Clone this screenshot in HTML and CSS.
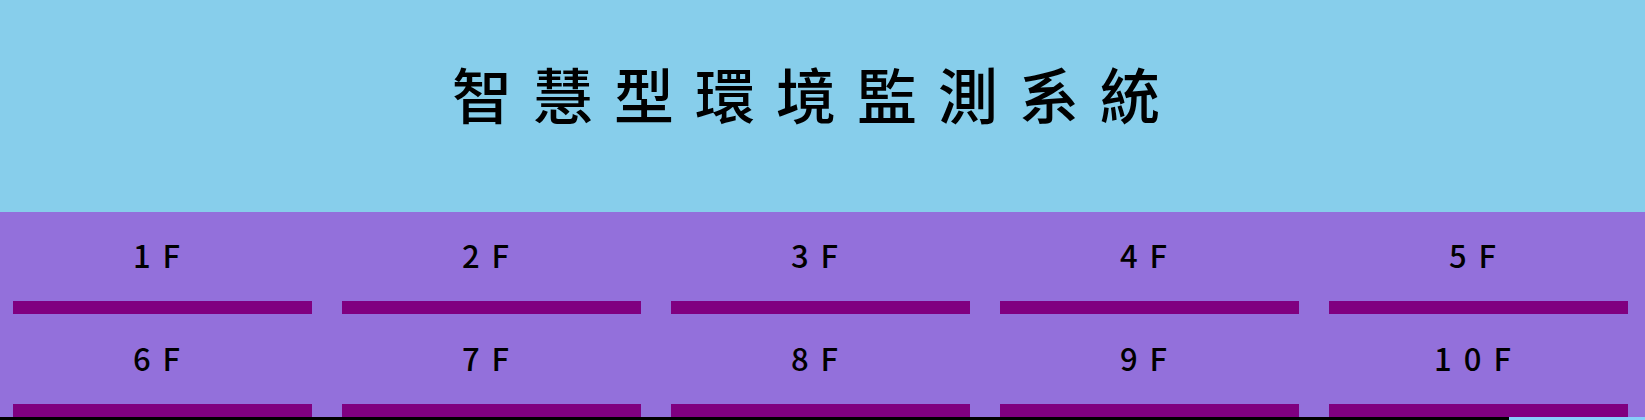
FILE: index.html
```html
<!DOCTYPE html>
<html lang="zh-Hant">
<head>
<meta charset="utf-8">
<title>智慧型環境監測系統</title>
<link rel="stylesheet" href="styles.css">
</head>
<body>
<header class="header"><h1 class="title">智慧型環境監測系統</h1></header>
<nav class="floors">
<a class="floor" href="#f1">1F</a>
<a class="floor" href="#f2">2F</a>
<a class="floor" href="#f3">3F</a>
<a class="floor" href="#f4">4F</a>
<a class="floor" href="#f5">5F</a>
<a class="floor" href="#f6">6F</a>
<a class="floor" href="#f7">7F</a>
<a class="floor" href="#f8">8F</a>
<a class="floor" href="#f9">9F</a>
<a class="floor" href="#f10">10F</a>
</nav>
<div class="strip"><div class="strip-end"></div></div>
</body>
</html>
```
FILE: styles.css
```css
body {
  margin: 0;
  background: #000;
  color: #000;
  font-family: "Noto Sans CJK TC", sans-serif;
  font-weight: 500;
}
.header {
  background: skyblue;
  padding: 48px 12px 74px 0;
}
.title {
  margin: 0;
  text-align: center;
  font-size: 60px;
  line-height: 90px;
  font-weight: 500;
  letter-spacing: 21px;
}
.floors {
  display: grid;
  grid-template-columns: repeat(5, 1fr);
  row-gap: 1px;
  background: mediumpurple;
}
.floor {
  margin: 0 17px 0 13px;
  padding: 18px 0 21px;
  border-bottom: 13px solid purple;
  text-align: center;
  text-decoration: none;
  color: inherit;
  font-size: 31px;
  line-height: 50px;
  letter-spacing: 12px;
}
.strip {
  display: flex;
  justify-content: flex-end;
  height: 3px;
  background: #000;
}
.strip-end {
  width: 136px;
  background: lightskyblue;
}
```
